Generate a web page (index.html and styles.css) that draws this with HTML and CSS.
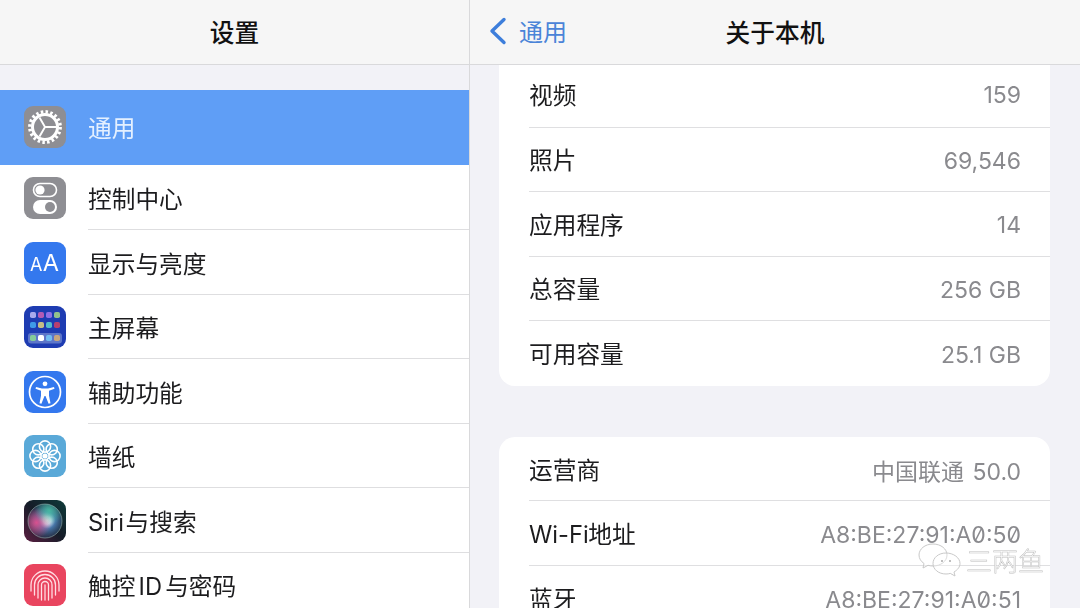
FILE: index.html
```html
<!DOCTYPE html>
<html lang="zh-CN">
<head>
<meta charset="utf-8">
<title>关于本机</title>
<link rel="stylesheet" href="styles.css">
</head>
<body>
<div class="app">
  <aside class="side">
    <header class="bar side-bar"><h1 class="title">设置</h1></header>
    <ul class="menu">
      <li class="item selected">
        <svg class="icon" viewBox="0 0 42 42"><rect width="42" height="42" rx="9" fill="#8e8e93"/><circle cx="21" cy="21" r="15.2" fill="none" stroke="#fff" stroke-width="3.4" stroke-dasharray="2.5 2.28"/><circle cx="21" cy="21" r="12.500" fill="none" stroke="#fff" stroke-width="3"/><path d="M21 21L15.500 11.500M21 21H32M21 21l-5.500 9.500" stroke="#fff" stroke-width="1.900" fill="none"/></svg>
        <span class="label">通用</span>
      </li>
      <li class="item">
        <svg class="icon" viewBox="0 0 42 42"><rect width="42" height="42" rx="9" fill="#8e8e93"/><rect x="9.500" y="6.500" width="23" height="13" rx="6.500" fill="none" stroke="#fff" stroke-width="1.600"/><circle cx="16" cy="13" r="4.600" fill="#fff"/><rect x="9" y="23" width="24" height="14" rx="7" fill="#fff"/><circle cx="26" cy="30" r="5" fill="#8e8e93"/></svg>
        <span class="label">控制中心</span>
      </li>
      <li class="item">
        <svg class="icon" viewBox="0 0 42 42"><rect width="42" height="42" rx="9" fill="#3478ee"/><text class="aa-small" x="6" y="29">A</text><text class="aa-big" x="18.700" y="29">A</text></svg>
        <span class="label">显示与亮度</span>
      </li>
      <li class="item">
        <svg class="icon" viewBox="0 0 42 42"><rect width="42" height="42" rx="9" fill="#1e3cb2"/><rect x="4" y="27" width="34" height="10.500" rx="3" fill="#5d76c9"/><g><rect x="6" y="6" width="6" height="6" rx="1.800" fill="#a9a9ec"/><rect x="14" y="6" width="6" height="6" rx="1.800" fill="#b45bb4"/><rect x="22" y="6" width="6" height="6" rx="1.800" fill="#8f6fe6"/><rect x="30" y="6" width="6" height="6" rx="1.800" fill="#93c08c"/><rect x="6" y="16" width="6" height="6" rx="1.800" fill="#3f9be8"/><rect x="14" y="16" width="6" height="6" rx="1.800" fill="#c5bd85"/><rect x="22" y="16" width="6" height="6" rx="1.800" fill="#52bccb"/><rect x="30" y="16" width="6" height="6" rx="1.800" fill="#b73f6f"/><rect x="6" y="29" width="6" height="6" rx="1.800" fill="#85cc9a"/><rect x="14" y="29" width="6" height="6" rx="1.800" fill="#fff"/><rect x="22" y="29" width="6" height="6" rx="1.800" fill="#72bdf0"/><rect x="30" y="29" width="6" height="6" rx="1.800" fill="#c9a67c"/></g></svg>
        <span class="label">主屏幕</span>
      </li>
      <li class="item">
        <svg class="icon" viewBox="0 0 42 42"><rect width="42" height="42" rx="9" fill="#3478ee"/><circle cx="21" cy="21" r="15.500" fill="none" stroke="#fff" stroke-width="1.700"/><circle cx="21" cy="12.800" r="2.400" fill="#fff"/><path d="M12 16l6 1.600h6L30 16l.5 1.700-5.500 2v5l1.500 7.600-1.900.4L21.500 25h-1l-3.100 7.700-1.900-.4L17 24.700v-5l-5.500-2z" fill="#fff"/></svg>
        <span class="label">辅助功能</span>
      </li>
      <li class="item">
        <svg class="icon" viewBox="0 0 42 42"><rect width="42" height="42" rx="9" fill="#5aa9d8"/><g fill="none" stroke="#fff" stroke-width="1.600"><circle cx="21" cy="11.500" r="5.600"/><circle cx="21" cy="30.500" r="5.600"/><circle cx="11.500" cy="21" r="5.600"/><circle cx="30.500" cy="21" r="5.600"/><circle cx="14.300" cy="14.300" r="5.600"/><circle cx="27.700" cy="14.300" r="5.600"/><circle cx="14.300" cy="27.700" r="5.600"/><circle cx="27.700" cy="27.700" r="5.600"/></g><circle cx="21" cy="21" r="2.600" fill="#fff"/></svg>
        <span class="label">墙纸</span>
      </li>
      <li class="item">
        <svg class="icon" viewBox="0 0 42 42"><defs><linearGradient id="sirimain" x1="1" y1="0" x2="0" y2="1"><stop offset="0" stop-color="#0f3b3a"/><stop offset=".5" stop-color="#151c28"/><stop offset="1" stop-color="#5c1f42"/></linearGradient><radialGradient id="sirib" cx=".56" cy=".48" r=".55"><stop offset="0" stop-color="#fff"/><stop offset=".2" stop-color="#cfe2f2"/><stop offset=".45" stop-color="#4d7fb5" stop-opacity=".9"/><stop offset="1" stop-color="#263a55" stop-opacity=".5"/></radialGradient><radialGradient id="siric" cx=".25" cy=".55" r=".45"><stop offset="0" stop-color="#e0508f" stop-opacity=".95"/><stop offset="1" stop-color="#e0508f" stop-opacity="0"/></radialGradient><radialGradient id="sirig" cx=".62" cy=".2" r=".42"><stop offset="0" stop-color="#48c4a2" stop-opacity=".85"/><stop offset="1" stop-color="#48c4a2" stop-opacity="0"/></radialGradient></defs><rect width="42" height="42" rx="9" fill="url(#sirimain)"/><circle cx="21" cy="21" r="17" fill="url(#sirib)"/><circle cx="21" cy="21" r="17" fill="url(#siric)"/><circle cx="21" cy="21" r="17" fill="url(#sirig)"/><circle cx="21" cy="21" r="17" fill="none" stroke="#b8d8d0" stroke-opacity=".5" stroke-width=".9"/></svg>
        <span class="label">Siri 与搜索</span>
      </li>
      <li class="item">
        <svg class="icon" viewBox="0 0 42 42"><rect width="42" height="42" rx="9" fill="#e9455f"/><g fill="none" stroke="#ffdde2" stroke-width="1.300" stroke-linecap="round"><path d="M7 27V21a14 14 0 0 1 28 0v6"/><path d="M10.500 31V21a10.500 10.500 0 0 1 21 0v10"/><path d="M14 34V21a7 7 0 0 1 14 0v13"/><path d="M17.500 36V21a3.500 3.500 0 0 1 7 0v15"/><path d="M21 36V21"/></g></svg>
        <span class="label label-wide">触控 ID 与密码</span>
      </li>
    </ul>
  </aside>
  <main class="detail">
    <header class="bar detail-bar">
      <div class="back">
        <svg class="chevron" viewBox="0 0 20 28"><path d="M16 2.500L4 14 16 25.500" fill="none" stroke="#3d7edb" stroke-width="3.400" stroke-linecap="round" stroke-linejoin="round"/></svg>
        <span class="back-text">通用</span>
      </div>
      <h2 class="title detail-title">关于本机</h2>
    </header>
    <section class="card card-first">
      <div class="row"><span class="key">视频</span><span class="val">159</span></div>
      <div class="row"><span class="key">照片</span><span class="val">69,546</span></div>
      <div class="row"><span class="key">应用程序</span><span class="val">14</span></div>
      <div class="row"><span class="key">总容量</span><span class="val">256 GB</span></div>
      <div class="row"><span class="key">可用容量</span><span class="val">25.1 GB</span></div>
    </section>
    <section class="card card-second">
      <div class="row"><span class="key">运营商</span><span class="val val-carrier">中国联通 50.0</span></div>
      <div class="row"><span class="key key-tight">Wi-Fi 地址</span><span class="val mac">A8:BE:27:91:A0:50</span></div>
      <div class="row"><span class="key">蓝牙</span><span class="val mac">A8:BE:27:91:A0:51</span></div>
    </section>
  </main>
  <div class="mark">
    <svg class="mark-icon" viewBox="0 0 46 36"><g fill="#fff" fill-opacity=".35" stroke="#c9c9c9" stroke-width="1"><path d="M17 2C9 2 3 7 3 13c0 3.500 2 6.500 5 8.500L7 26l5-2.700c1.600.5 3.300.7 5 .7 8 0 14-5 14-11S25 2 17 2z"/><path d="M30 11c-7.500 0-13 4.700-13 10.500S22.500 32 30 32c1.500 0 3-.2 4.300-.6L39 34l-1-4c3.500-2 6-5 6-8.500C44 15.700 37.500 11 30 11z"/></g><circle cx="26" cy="19" r="1" fill="#aaa"/><circle cx="34" cy="19" r="1" fill="#aaa"/></svg>
    <span class="mark-text">三两鱼</span>
  </div>
</div>
</body>
</html>
```
FILE: styles.css
```css
* { box-sizing: border-box; margin: 0; padding: 0; }
html, body { width: 1080px; height: 608px; overflow: hidden; }
body {
  font-family: "Inter", "Noto Sans CJK SC", sans-serif;
  color: #1c1c1e;
  background: #f2f2f7;
}
.app {
  position: relative;
  display: grid;
  grid-template-columns: 470px 610px;
  width: 1080px;
  height: 608px;
  overflow: hidden;
  filter: blur(0.35px);
}
.bar {
  height: 65px;
  flex: none;
  background: #f6f6f6;
  border-bottom: 1px solid #d9d9db;
  display: flex;
  align-items: center;
  justify-content: center;
  padding-bottom: 3px;
  position: relative;
}
.title {
  font-family: "Noto Sans CJK SC", sans-serif;
  font-size: 24.700px;
  font-weight: 500;
  color: #111;
}
.side {
  height: 608px;
  display: flex;
  flex-direction: column;
  border-right: 1px solid #d9d9db;
  overflow: hidden;
  background: #f2f2f7;
}
.menu {
  list-style: none;
  margin-top: 25px;
  background: #fff;
}
.item {
  height: 64.500px;
  display: flex;
  align-items: center;
  gap: 22px;
  padding-left: 24px;
  padding-top: 1px;
  position: relative;
}
.item + .item::after {
  content: "";
  position: absolute;
  left: 88px;
  right: 0;
  bottom: 0;
  height: 1px;
  background: #dedee0;
}
.selected {
  height: 75px;
  padding-top: 0;
  padding-bottom: 1px;
  background: #5f9ef6;
  color: #e4f0ff;
}
.selected + .item { height: 65px; }
.icon { width: 42px; height: 42px; flex: none; }
.label {
  font-family: "Inter", "Noto Sans CJK SC", sans-serif;
  font-size: 23.700px;
  word-spacing: -5px;
}
.label-wide { word-spacing: -3.500px; }
.aa-small { font: 400 18px "Inter", sans-serif; fill: #fff; }
.aa-big { font: 400 23.500px "Inter", sans-serif; fill: #fff; }
.detail {
  height: 608px;
  display: flex;
  flex-direction: column;
  overflow: hidden;
}
.back {
  position: absolute;
  left: 18px;
  top: 13px;
  display: flex;
  align-items: center;
  gap: 11px;
}
.chevron { width: 20px; height: 28px; }
.back-text {
  font-family: "Noto Sans CJK SC", sans-serif;
  font-size: 24px;
  color: #4a84d8;
}
.card {
  margin: 0 30px 0 29px;
  width: 551px;
  background: #fff;
  padding-left: 30px;
  flex: none;
}
.card-first { border-radius: 0 0 16px 16px; margin-top: -1px; }
.card-second { border-radius: 16px 16px 0 0; margin-top: 51.300px; }
.row {
  height: 64.500px;
  display: flex;
  align-items: center;
  justify-content: space-between;
  padding-right: 29px;
  border-bottom: 1px solid #dfdfe1;
}
.row:last-child { border-bottom: 0; }
.card-first .row:first-child { height: 63.700px; }
.card-first .row:first-child .key { padding-bottom: 2px; }
.key {
  font-size: 23.700px;
  color: #1c1c1e;
  word-spacing: -5px;
}
.key-tight { word-spacing: -7px; }
.val {
  font-size: 23px;
  color: #8a8a8e;
  padding-top: 3px;
}
.card-first .row:first-child .val { padding-top: 0; }
.val-carrier { word-spacing: 2px; }
.mac { font-feature-settings: "zero" 1; }
.mark {
  position: absolute;
  left: 916px;
  top: 541px;
  display: flex;
  align-items: center;
  gap: 4px;
}
.mark-icon { width: 46px; height: 36px; }
.mark-text {
  font-family: "Noto Sans CJK SC", sans-serif;
  font-size: 26px;
  font-weight: 300;
  color: #fff;
  -webkit-text-stroke: 0.500px #bdbdbd;
}
```
